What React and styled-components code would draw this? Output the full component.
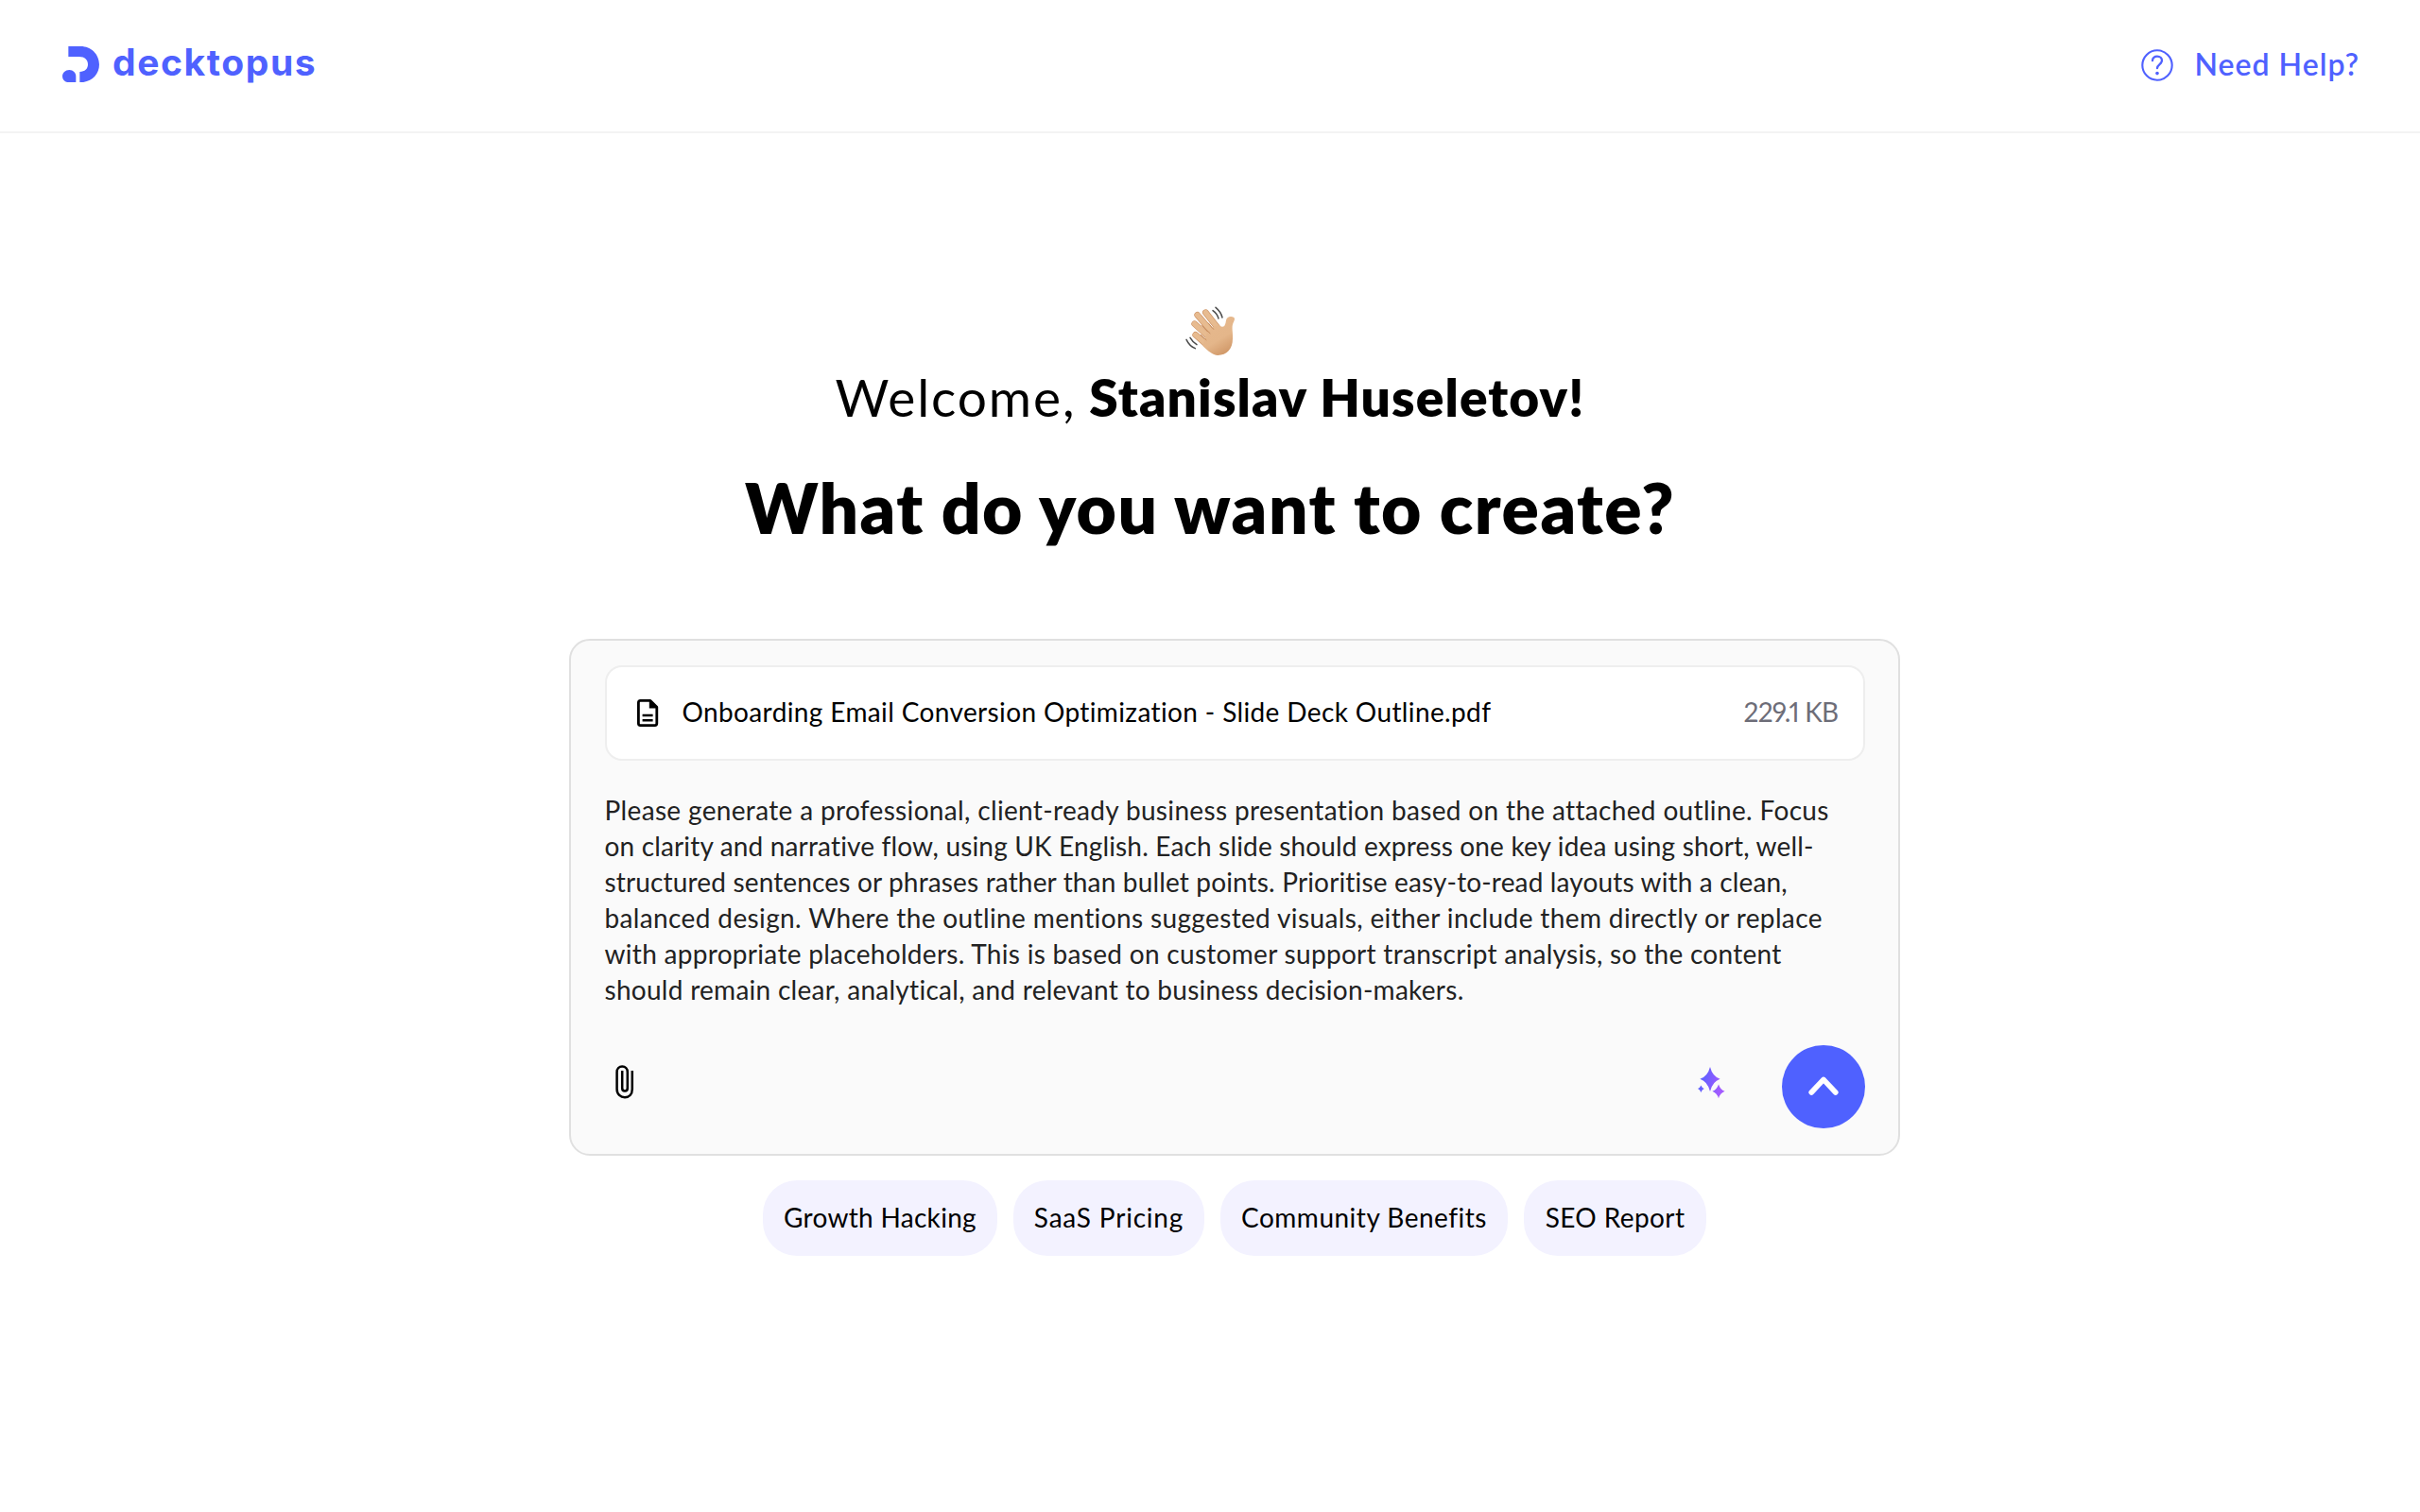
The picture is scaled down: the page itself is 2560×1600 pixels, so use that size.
import React from "react";
import styled, { createGlobalStyle } from "styled-components";

const BRAND = "#4f61ff";

const GlobalStyle = createGlobalStyle`
  *, *::before, *::after { box-sizing: border-box; }
  body {
    margin: 0;
    background: #fff;
    color: #000;
    font-family: Lato, "Open Sans", sans-serif;
  }
  svg { display: block; flex: none; }
`;

const Page = styled.div`
  min-height: 1600px;
  display: flex;
  flex-direction: column;
`;

const Header = styled.header`
  display: flex;
  justify-content: space-between;
  align-items: flex-start;
  height: 141px;
  padding: 41px 64px 0 66px;
  border-bottom: 2px solid #f3f3f3;
  color: ${BRAND};
`;

const Brand = styled.div`
  display: flex;
  gap: 14px;
`;

const BrandMark = styled.svg`
  width: 39px;
  height: 38.3px;
  margin-top: 8px;
`;

const BrandName = styled.span`
  margin-top: 1px;
  font: 700 39px/48px Inter, sans-serif;
  letter-spacing: 1.6px;
`;

const HelpLink = styled.a`
  display: flex;
  gap: 23px;
  padding-top: 6px;
`;

const HelpIcon = styled.svg`
  width: 34px;
  height: 34px;
  margin-top: 5px;
`;

const HelpLabel = styled.span`
  margin-top: 1px;
  font-size: 32px;
  font-weight: 600;
  line-height: 40px;
  letter-spacing: 1px;
`;

const Main = styled.main`
  display: flex;
  flex-direction: column;
  align-items: center;
  padding-top: 182px;
`;

const Wave = styled.svg`
  width: 55px;
  height: 54px;
`;

const Greeting = styled.p`
  margin: 10px 0 0;
  font-size: 55px;
  line-height: 66px;
  letter-spacing: 1.9px;
  word-spacing: -2px;
  white-space: nowrap;
`;

const UserName = styled.strong`
  font-weight: 800;
  letter-spacing: 1.15px;
  word-spacing: 0;
`;

const Title = styled.h1`
  margin: 41px 0 0;
  font-size: 73px;
  font-weight: 800;
  line-height: 86px;
  letter-spacing: 1.5px;
  word-spacing: -0.5px;
  white-space: nowrap;
`;

const Composer = styled.section`
  width: 1408px;
  height: 547px;
  margin: 96px 0 0 51px;
  padding: 26px 35px 27px 36px;
  display: flex;
  flex-direction: column;
  background: #fafafa;
  border: 2px solid #e0e0e0;
  border-radius: 22px;
`;

const FileCard = styled.div`
  display: flex;
  align-items: center;
  height: 101px;
  padding: 0 26px 0 32px;
  background: #fff;
  border: 2px solid #eee;
  border-radius: 18px;
`;

const FileName = styled.span`
  margin: 0 0 3px 25px;
  font-size: 28px;
  line-height: 38px;
  letter-spacing: 0.376px;
`;

const FileSize = styled.span`
  margin: 0 0 3px auto;
  font-size: 28px;
  line-height: 38px;
  color: #6d6d78;
  font-variant-numeric: proportional-nums;
  letter-spacing: -0.7px;
`;

const Prompt = styled.div`
  margin-top: 33px;
  font-size: 28px;
  line-height: 38px;
  color: #222;
`;

const PromptLine = styled.div`
  white-space: nowrap;
  letter-spacing: ${(p) => p.$tracking}px;
`;

const Toolbar = styled.div`
  display: flex;
  align-items: center;
  margin-top: auto;
  padding-left: 11px;
`;

const ClipIcon = styled.svg`
  width: 20px;
  height: 36px;
  margin-bottom: 10px;
`;

const SparkleIcon = styled.svg`
  width: 29px;
  height: 34px;
  margin: 0 60px 9px auto;
`;

const SendButton = styled.button`
  display: flex;
  align-items: center;
  justify-content: center;
  width: 88px;
  height: 88px;
  padding: 0 0 2px;
  border: 0;
  border-radius: 50%;
  background: ${BRAND};
`;

const Suggestions = styled.div`
  display: flex;
  gap: 17px;
  margin: 26px 0 0 52px;
`;

const Chip = styled.button`
  width: ${(p) => p.$width}px;
  height: 80px;
  padding: 0 0 2px;
  border: 0;
  border-radius: 36px;
  background: #f3f2ff;
  color: #000;
  font: 400 28px/38px Lato, "Open Sans", sans-serif;
  letter-spacing: ${(p) => p.$tracking}px;
  white-space: nowrap;
`;

const promptLines = [
  [0.339, "Please generate a professional, client-ready business presentation based on the attached outline. Focus"],
  [0.16, "on clarity and narrative flow, using UK English. Each slide should express one key idea using short, well-"],
  [0.155, "structured sentences or phrases rather than bullet points. Prioritise easy-to-read layouts with a clean,"],
  [0.372, "balanced design. Where the outline mentions suggested visuals, either include them directly or replace"],
  [0.3, "with appropriate placeholders. This is based on customer support transcript analysis, so the content"],
  [0.28, "should remain clear, analytical, and relevant to business decision-makers."],
];

const suggestions = [
  ["Growth Hacking", 248, 0.3],
  ["SaaS Pricing", 202, 0.8],
  ["Community Benefits", 304, 0.5],
  ["SEO Report", 193, 0.4],
];

const WavingHand = () => (
  <Wave viewBox="70 69 165 162" role="img" aria-label="Waving hand">
    <defs>
      <linearGradient id="skin" x1="0.2" y1="0" x2="0.7" y2="1">
        <stop offset="0" stopColor="#e6b88d" />
        <stop offset="0.6" stopColor="#e4b68a" />
        <stop offset="1" stopColor="#cf9666" />
      </linearGradient>
    </defs>
    <g stroke="#cf9669" strokeWidth="20" strokeLinecap="round" fill="none">
      <path d="M137 92L181 148" />
      <path d="M111 100L162 160" />
      <path d="M102 128L152 174" />
      <path d="M105 163L145 198" />
    </g>
    <g stroke="#e7bb90" strokeWidth="16" strokeLinecap="round" fill="none">
      <path d="M137 92L181 148" />
      <path d="M111 100L162 160" />
      <path d="M102 128L152 174" />
      <path d="M105 163L145 198" />
    </g>
    <path
      d="M143 154L162 138L176 131Q190 142 197 134Q201 128 202 117C204 105 217 102 226 107C232 111 228 118 224 127C219 140 224 153 223 175C223 208 204 228 176 228C158 227 145 214 128 198Q134 173 143 154Z"
      fill="url(#skin)"
    />
    <g stroke="#c58a5b" strokeWidth="3" strokeLinecap="round" fill="none">
      <path d="M146 126L162 145" />
      <path d="M126 134L151 158" />
      <path d="M122 163L139 179" />
    </g>
    <g stroke="#4c4c4c" strokeWidth="4.5" strokeLinecap="round" fill="none">
      <path d="M169 76Q186 90 190 108" />
      <path d="M160 86Q174 96 178 111" />
      <path d="M88 172Q96 186 109 194" />
      <path d="M76 178Q86 199 104 206" />
    </g>
  </Wave>
);

const DocumentIcon = () => (
  <svg width="23" height="29" viewBox="0 0 23 29" fill="none" stroke="#000" strokeWidth="2.8">
    <path d="M14 1.4H3.4Q1.4 1.4 1.4 3.4V25.6Q1.4 27.6 3.4 27.6H18.8Q20.8 27.6 20.8 25.6V8.2Z" strokeLinejoin="round" />
    <path d="M12.8 1V9.4H21.4V8Z" fill="#000" stroke="none" />
    <path d="M5.6 17H16.6M5.6 22.3H16.6" strokeWidth="2.5" />
  </svg>
);

export default function App() {
  return (
    <Page>
      <GlobalStyle />
      <Header>
        <Brand>
          <BrandMark viewBox="79 57 117 115" fill="currentColor">
            <path d="M98 57H137C170 57 196 82 196 115C196 148 170 172 134 172V138C150 137 160 129 160 114C160 100 150 90 132 90H98Z" />
            <path d="M122 172H101C88 172 79 163 79 152C79 141 88 132 101 132C113 132 122 141 122 153Z" />
          </BrandMark>
          <BrandName>decktopus</BrandName>
        </Brand>
        <HelpLink>
          <HelpIcon viewBox="0 0 34 34" fill="none" stroke="currentColor" strokeLinecap="round">
            <circle cx="17" cy="17" r="15.7" strokeWidth="2.1" />
            <path d="M12 12.2C12 9.3 14.2 7.6 17 7.6C19.9 7.6 22 9.4 22 12.1C22 16 17 16.2 17 20.2" strokeWidth="2.3" />
            <circle cx="17" cy="25.6" r="1.8" fill="currentColor" stroke="none" />
          </HelpIcon>
          <HelpLabel>Need Help?</HelpLabel>
        </HelpLink>
      </Header>
      <Main>
        <WavingHand />
        <Greeting>
          Welcome, <UserName>Stanislav Huseletov!</UserName>
        </Greeting>
        <Title>What do you want to create?</Title>
        <Composer>
          <FileCard>
            <DocumentIcon />
            <FileName>Onboarding Email Conversion Optimization - Slide Deck Outline.pdf</FileName>
            <FileSize>229.1 KB</FileSize>
          </FileCard>
          <Prompt>
            {promptLines.map(([tracking, text]) => (
              <PromptLine key={text} $tracking={tracking}>
                {text}
              </PromptLine>
            ))}
          </Prompt>
          <Toolbar>
            <ClipIcon viewBox="0 0 20 36" fill="none" stroke="#000" strokeWidth="2.5">
              <path d="M17.8 6V25.5C17.8 31 14.5 34.2 10 34.2S1.6 31 1.6 25.5V7.5C1.6 3.8 4 1.6 7.2 1.6S12.8 3.8 12.8 7.5V24.5C12.8 28.6 7.2 28.6 7.2 24.5V6" />
            </ClipIcon>
            <SparkleIcon viewBox="0 0 29 34">
              <defs>
                <linearGradient id="spark" gradientUnits="userSpaceOnUse" x1="0" y1="8" x2="26" y2="14">
                  <stop offset="0" stopColor="#4f61ff" />
                  <stop offset="1" stopColor="#a35bff" />
                </linearGradient>
              </defs>
              <g fill="url(#spark)">
                <path d="M13 0Q15.5 10 23.6 12.8Q15.5 15.6 13 26Q10.5 15.6 2.4 12.8Q10.5 10 13 0Z" />
                <path d="M22 18.5Q23.8 24 28.6 25.8Q23.8 27.6 22 33.2Q20.2 27.6 15.4 25.8Q20.2 24 22 18.5Z" />
                <path d="M3.4 19.5Q4.4 22.2 6.8 23.1Q4.4 24.1 3.4 27Q2.4 24.1 0 23.1Q2.4 22.2 3.4 19.5Z" />
              </g>
            </SparkleIcon>
            <SendButton aria-label="Send">
              <svg width="34" height="22" viewBox="0 0 34 22" fill="none" stroke="#fff" strokeWidth="5.6" strokeLinecap="round" strokeLinejoin="round">
                <path d="M4.2 18L17 4.4L29.8 18" />
              </svg>
            </SendButton>
          </Toolbar>
        </Composer>
        <Suggestions>
          {suggestions.map(([label, width, tracking]) => (
            <Chip key={label} $width={width} $tracking={tracking}>
              {label}
            </Chip>
          ))}
        </Suggestions>
      </Main>
    </Page>
  );
}
